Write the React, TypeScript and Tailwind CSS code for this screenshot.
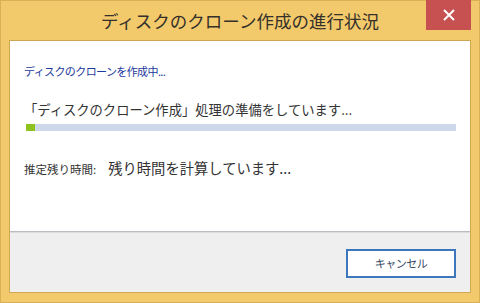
export default function App() {
  const progress = 2;

  return (
    <div
      className="relative flex h-[303px] w-[480px] flex-col border border-[#d9b055] bg-[#f2c96b]"
      style={{ fontFamily: '"Noto Sans CJK JP", "Noto Sans", sans-serif' }}
    >
      {/* Title bar */}
      <div className="flex h-[39px] items-center justify-center pt-[2px] text-[17.5px] text-[#35302a]">
        ディスクのクローン作成の進行状況
      </div>
      <button className="absolute right-[8px] top-[-1px] flex h-[30px] w-[45px] items-center justify-center bg-[#c75050]">
        <svg width="12" height="12" viewBox="0 0 12 12">
          <path d="M1 1l10 10M11 1L1 11" stroke="#fff" strokeWidth="2" />
        </svg>
      </button>

      {/* Body */}
      <div className="mx-[8px] mb-[9px] flex flex-1 flex-col border border-[#cfa853]">
        <div className="flex h-[190px] flex-col bg-white px-[14px] pt-[22px]">
          <div className="h-[16px] text-[11px] leading-[16px] tracking-[-0.6px] text-[#1c3a9c]">
            ディスクのクローンを作成中...
          </div>
          <div className="mt-[22px] h-[18px] text-[13.3px] leading-[18px] text-[#333]">
            「ディスクのクローン作成」処理の準備をしています...
          </div>
          <div className="ml-[2px] mt-[5px] h-[7px] w-[430px] bg-[#cdd9ea]">
            <div className="h-full bg-[#8dc21f]" style={{ width: `${progress}%` }} />
          </div>
          <div className="mt-[28px] flex h-[18px] items-baseline leading-[18px] text-[#333]">
            <span className="text-[11.5px]">推定残り時間:</span>
            <span className="ml-[12px] text-[14.3px]">残り時間を計算しています...</span>
          </div>
        </div>
        <div className="h-px bg-[#b9bdc1]" />
        <div className="h-px bg-[#dcdcdc]" />
        <div className="flex flex-1 items-start justify-end bg-[#efefef] pr-[14px] pt-[16px]">
          <button className="h-[29px] w-[110px] border-2 border-[#3c76bd] bg-white text-[11px] tracking-[-0.5px] text-[#3a4a66]">
            キャンセル
          </button>
        </div>
      </div>
    </div>
  );
}
